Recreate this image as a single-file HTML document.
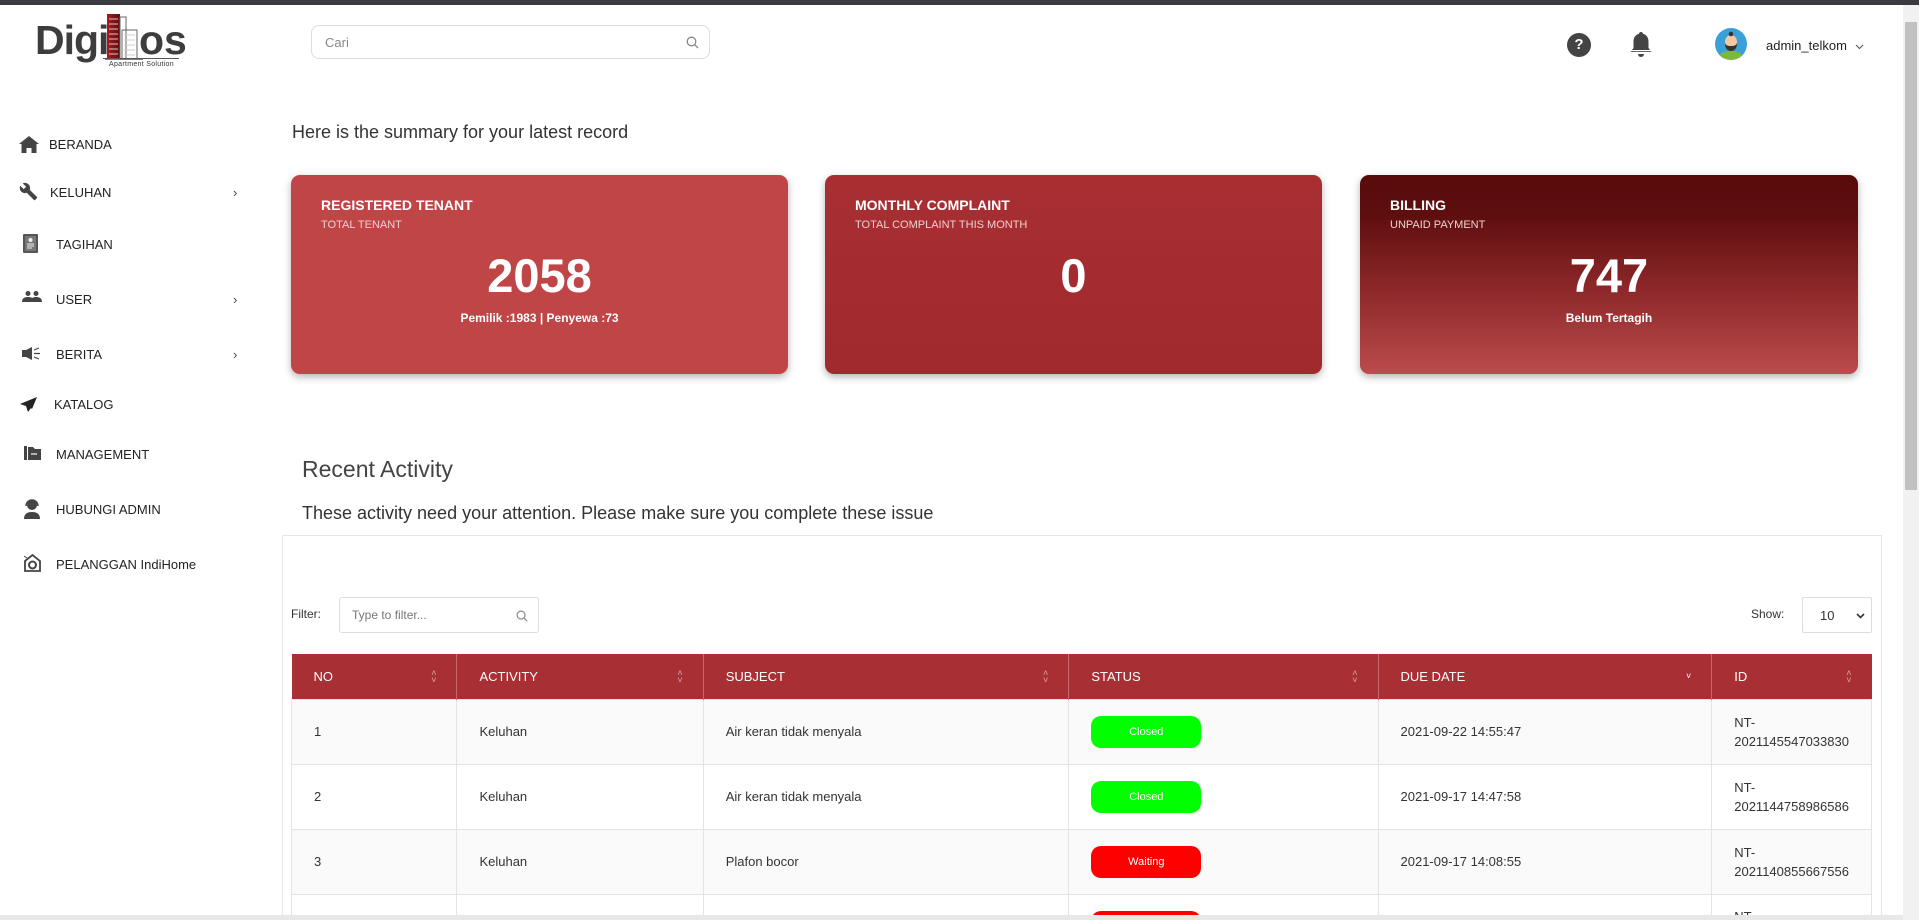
<!DOCTYPE html>
<html style="width:1919px;height:920px;overflow:hidden"><head><meta charset="utf-8"><style>
*{box-sizing:border-box;margin:0;padding:0}
body{width:1919px;height:920px;overflow:hidden;background:#fff;font-family:"Liberation Sans",Arial,sans-serif;color:#222;position:relative}
#wrap{position:absolute;left:0;top:0;width:1919px;height:920px;overflow:hidden}
.abs{position:absolute}
.topbar{left:0;top:0;width:1919px;height:5px;background:#3a3a40}
.nav{position:absolute;left:0;font-size:13px;color:#222;display:flex;align-items:center}
.chev{position:absolute;left:233px;font-size:13px;color:#444}
.card{position:absolute;top:175px;height:199px;border-radius:9px;color:#fff;box-shadow:0 3px 8px rgba(0,0,0,.3)}
.card .t{position:absolute;left:30px;top:22px;font-size:14px;font-weight:bold}
.card .s{position:absolute;left:30px;top:44px;font-size:11px;color:#f0d0d0}
.card .n{position:absolute;left:0;right:0;top:73px;text-align:center;font-size:47px;font-weight:bold}
.card .f{position:absolute;left:0;right:0;top:136px;text-align:center;font-size:12px;font-weight:bold}
table{position:absolute;left:291px;top:654px;width:1581px;border-collapse:collapse;font-size:13px}
th{background:#a83034;color:#fff;text-align:left;font-weight:normal;height:45px;padding:0 22px;border-right:1px solid #c46a6d;position:relative;font-size:13px}
th:last-child{border-right:none}
td{height:65px;padding:0 22px;border:1px solid #e4e4e4;color:#333}
tr:nth-child(even) td{background:#fafafa}
.sort{position:absolute;right:20px;top:16px;font-size:9px;line-height:7px;color:#d8a8a8}
.pill{display:inline-block;width:110px;height:32px;border-radius:10px;color:#fff;text-align:center;line-height:32px;font-size:11px}
.g{background:#00ff00}.r{background:#ff0000}
</style></head><body><div id="wrap">
<div class="abs topbar"></div>
<!-- logo -->
<div class="abs" style="left:35px;top:14px;width:150px;height:55px">
<div class="abs" style="left:0;top:3px;font-size:41px;font-weight:bold;color:#3d3d3d;letter-spacing:-1px">Digi</div>
<svg class="abs" style="left:70px;top:0" width="38" height="46" viewBox="0 0 38 46"><defs><linearGradient id="lg" x1="0" x2="1"><stop offset="0" stop-color="#b0181c"/><stop offset="1" stop-color="#5a1012"/></linearGradient></defs><rect x="2" y="0" width="13" height="45" fill="url(#lg)"/><rect x="15" y="3" width="6" height="42" fill="none" stroke="#666" stroke-width="1"/><rect x="17" y="16" width="15" height="29" fill="none" stroke="#666" stroke-width="1"/><g stroke="#ccc" stroke-width="1"><path d="M4 5h9M4 10h9M4 15h9M4 20h9M4 25h9M4 30h9M4 35h9M4 40h9M19 21h11M19 26h11M19 31h11M19 36h11M19 41h11"/></g><path d="M0 45h38" stroke="#555" stroke-width="1.5"/></svg>
<div class="abs" style="left:104px;top:3px;font-size:41px;font-weight:bold;color:#3d3d3d">os</div>
<div class="abs" style="left:68px;top:44px;width:76px;height:1px;background:#555"></div>
<div class="abs" style="left:74px;top:47px;font-size:7px;color:#333;letter-spacing:.3px">Apartment Solution</div>
</div>
<!-- search -->
<div class="abs" style="left:311px;top:25px;width:399px;height:34px;border:1px solid #ddd;border-radius:8px">
<span class="abs" style="left:13px;top:9px;font-size:13px;color:#888">Cari</span>
<svg class="abs" style="right:10px;top:10px" width="13" height="13" viewBox="0 0 13 13"><circle cx="5.5" cy="5.5" r="4.3" fill="none" stroke="#888" stroke-width="1.3"/><path d="M8.6 8.6l3.4 3.4" stroke="#888" stroke-width="1.3"/></svg>
</div>
<!-- header right -->
<div class="abs" style="left:1567px;top:33px;width:24px;height:24px;border-radius:50%;background:#444;color:#fff;font-size:15px;font-weight:bold;text-align:center;line-height:24px">?</div>
<svg class="abs" style="left:1629px;top:31px" width="24" height="28" viewBox="0 0 24 28"><path d="M12 1c1.2 0 2 .8 2 1.8C18 4 19.5 7 19.5 11v6l3 4H1.5l3-4v-6C4.5 7 6 4 10 2.8 10 1.8 10.8 1 12 1z" fill="#444"/><rect x="2" y="19" width="20" height="1.2" fill="#fff"/><path d="M9 23h6a3 3 0 0 1-6 0z" fill="#444"/></svg>
<svg class="abs" style="left:1715px;top:28px" width="32" height="32" viewBox="0 0 32 32"><clipPath id="c"><circle cx="16" cy="16" r="16"/></clipPath><g clip-path="url(#c)"><rect width="32" height="32" fill="#3aa0d8"/><path d="M3 32c1-7 6-9 13-9s12 2 13 9z" fill="#7cb83a"/><ellipse cx="16" cy="14" rx="6" ry="7" fill="#f2c9a0"/><path d="M10 15c0 6 3 8 6 8s6-2 6-8c-1 2-2 3-6 3s-5-1-6-3z" fill="#333"/><circle cx="16" cy="6" r="2.3" fill="#333"/></g></svg>
<div class="abs" style="left:1766px;top:38px;font-size:13px;color:#222">admin_telkom</div>
<svg class="abs" style="left:1855px;top:44px" width="9" height="6" viewBox="0 0 9 6"><path d="M1 1l3.5 3.5L8 1" fill="none" stroke="#555" stroke-width="1.1"/></svg>
<!-- scrollbar -->
<div class="abs" style="left:1903px;top:5px;width:16px;height:915px;background:#f1f1f1"></div>
<div class="abs" style="left:1905px;top:22px;width:12px;height:468px;background:#c1c1c1"></div>
<!-- sidebar -->
<svg class="abs" style="left:19px;top:136px" width="20" height="17" viewBox="0 0 20 17"><path d="M10 0L0 8h2.5v9h5v-5h5v5h5V8H20z" fill="#444"/></svg>
<div class="nav" style="left:49px;top:137px">BERANDA</div>
<svg class="abs" style="left:19px;top:182px" width="19" height="19" viewBox="0 0 24 24"><path d="M22.7 19l-9.1-9.1c.9-2.3.4-5-1.5-6.9-2-2-5-2.4-7.4-1.3L9 6 6 9 1.6 4.7C.4 7.1.9 10.1 2.9 12.1c1.9 1.9 4.6 2.4 6.9 1.5l9.1 9.1c.4.4 1 .4 1.4 0l2.3-2.3c.5-.4.5-1.1.1-1.4z" fill="#444"/></svg>
<div class="nav" style="left:50px;top:185px">KELUHAN</div><div class="chev" style="top:185px">›</div>
<svg class="abs" style="left:23px;top:233px" width="17" height="21" viewBox="0 0 17 21"><rect x="0" y="1" width="15" height="19" rx="1" fill="#555"/><rect x="2" y="3" width="11" height="15" fill="#777"/><circle cx="7.5" cy="7" r="2" fill="#eee"/><path d="M4 11h7M4 13h7M4 15h5" stroke="#eee"/></svg>
<div class="nav" style="left:56px;top:237px">TAGIHAN</div>
<svg class="abs" style="left:22px;top:291px" width="20" height="11" viewBox="0 0 20 11"><circle cx="6" cy="2.5" r="2.5" fill="#444"/><circle cx="14" cy="2.5" r="2.5" fill="#444"/><path d="M0 11c0-4 3-5 6-5s6 1 6 5zM9 11c0-4 2-5 5-5s6 1 6 5z" fill="#444"/></svg>
<div class="nav" style="left:56px;top:292px">USER</div><div class="chev" style="top:292px">›</div>
<svg class="abs" style="left:22px;top:347px" width="20" height="13" viewBox="0 0 20 13"><path d="M0 3h4l6-3v13l-6-3H0z" fill="#444"/><path d="M12 3l5-2M12 6.5h6M12 10l5 2" stroke="#444" stroke-width="1.2"/></svg>
<div class="nav" style="left:56px;top:347px">BERITA</div><div class="chev" style="top:347px">›</div>
<svg class="abs" style="left:20px;top:397px" width="17" height="15" viewBox="0 0 17 15"><path d="M17 0L0 7l6 2 2 6 3-4 1 1z" fill="#222"/></svg>
<div class="nav" style="left:54px;top:397px">KATALOG</div>
<svg class="abs" style="left:24px;top:446px" width="17" height="14" viewBox="0 0 17 14"><rect x="0" y="0" width="3" height="14" fill="#444"/><path d="M4 1h5l2 2h6v11H4z" fill="#444"/><path d="M7 8h6" stroke="#fff" stroke-width="1.2"/></svg>
<div class="nav" style="left:56px;top:447px">MANAGEMENT</div>
<svg class="abs" style="left:24px;top:499px" width="16" height="20" viewBox="0 0 16 20"><circle cx="8" cy="6" r="5" fill="#444"/><path d="M0 20c0-5 3-7 8-7s8 2 8 7z" fill="#444"/><path d="M2 7a6 6 0 0 1 12 0" fill="none" stroke="#444" stroke-width="1.5"/></svg>
<div class="nav" style="left:56px;top:502px">HUBUNGI ADMIN</div>
<svg class="abs" style="left:23px;top:553px" width="19" height="19" viewBox="0 0 19 19"><path d="M2 8L9.5 2 17 8v10H2z" fill="none" stroke="#444" stroke-width="1.8"/><circle cx="9.5" cy="12" r="3.5" fill="none" stroke="#444" stroke-width="2"/><path d="M1 3l3 2" stroke="#444"/></svg>
<div class="nav" style="left:56px;top:557px">PELANGGAN IndiHome</div>
<!-- main -->
<div class="abs" style="left:292px;top:122px;font-size:18px;color:#333">Here is the summary for your latest record</div>
<div class="card" style="left:291px;width:497px;background:#c04546">
<div class="t">REGISTERED TENANT</div><div class="s">TOTAL TENANT</div><div class="n">2058</div><div class="f">Pemilik :1983 | Penyewa :73</div></div>
<div class="card" style="left:825px;width:497px;background:linear-gradient(#a82e32,#a02a2e)">
<div class="t">MONTHLY COMPLAINT</div><div class="s">TOTAL COMPLAINT THIS MONTH</div><div class="n">0</div></div>
<div class="card" style="left:1360px;width:498px;background:linear-gradient(#580a0b 0%,#5e0e0f 20%,#8a2628 55%,#bb4b4c 100%)">
<div class="t">BILLING</div><div class="s">UNPAID PAYMENT</div><div class="n">747</div><div class="f">Belum Tertagih</div></div>
<div class="abs" style="left:302px;top:456px;font-size:23px;color:#444">Recent Activity</div>
<div class="abs" style="left:302px;top:503px;font-size:18px;color:#333">These activity need your attention. Please make sure you complete these issue</div>
<div class="abs" style="left:282px;top:535px;width:1600px;height:390px;border:1px solid #e6e6e6;border-bottom:none"></div>
<div class="abs" style="left:291px;top:607px;font-size:12px;color:#333">Filter:</div>
<div class="abs" style="left:339px;top:597px;width:200px;height:36px;border:1px solid #ddd;border-radius:3px">
<span class="abs" style="left:12px;top:10px;font-size:12px;color:#777">Type to filter...</span>
<svg class="abs" style="right:10px;top:12px" width="12" height="12" viewBox="0 0 13 13"><circle cx="5.5" cy="5.5" r="4.3" fill="none" stroke="#888" stroke-width="1.3"/><path d="M8.6 8.6l3.4 3.4" stroke="#888" stroke-width="1.3"/></svg></div>
<div class="abs" style="left:1751px;top:607px;font-size:12px;color:#333">Show:</div>
<div class="abs" style="left:1802px;top:597px;width:70px;height:36px;border:1px solid #ddd;border-radius:2px">
<span class="abs" style="left:17px;top:10px;font-size:13px;color:#333">10</span>
<svg class="abs" style="left:53px;top:15px" width="9" height="6" viewBox="0 0 9 6"><path d="M1 1l3.5 3.5L8 1" fill="none" stroke="#333" stroke-width="1.6"/></svg></div>
<table>
<colgroup><col style="width:166px"><col style="width:247px"><col style="width:367px"><col style="width:310px"><col style="width:335px"><col style="width:156px"></colgroup>
<tr><th>NO<span class="sort">˄<br>˅</span></th><th>ACTIVITY<span class="sort">˄<br>˅</span></th><th>SUBJECT<span class="sort">˄<br>˅</span></th><th>STATUS<span class="sort">˄<br>˅</span></th><th>DUE DATE<span class="sort" style="color:#fff;top:19px">˅</span></th><th>ID<span class="sort">˄<br>˅</span></th></tr>
<tr><td>1</td><td>Keluhan</td><td>Air keran tidak menyala</td><td><span class="pill g">Closed</span></td><td>2021-09-22 14:55:47</td><td style="line-height:19px">NT-<br>2021145547033830</td></tr>
<tr><td>2</td><td>Keluhan</td><td>Air keran tidak menyala</td><td><span class="pill g">Closed</span></td><td>2021-09-17 14:47:58</td><td style="line-height:19px">NT-<br>2021144758986586</td></tr>
<tr><td>3</td><td>Keluhan</td><td>Plafon bocor</td><td><span class="pill r">Waiting</span></td><td>2021-09-17 14:08:55</td><td style="line-height:19px">NT-<br>2021140855667556</td></tr>
<tr><td style="vertical-align:top;padding-top:14px"></td><td></td><td></td><td style="vertical-align:top;padding-top:16px"><span class="pill r"></span></td><td></td><td style="vertical-align:top;padding-top:14px">NT-</td></tr>
</table>
<div class="abs" style="left:0;top:915px;width:1903px;height:5px;background:#e8e8e8"></div>
</div></body></html>
